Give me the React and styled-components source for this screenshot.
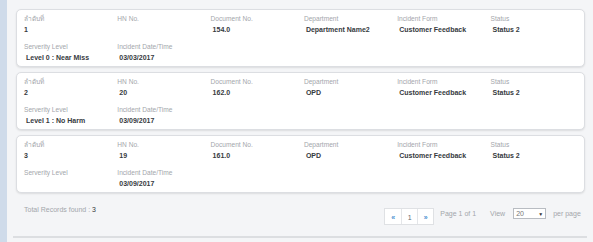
import React from 'react';
import styled, { createGlobalStyle } from 'styled-components';

const GlobalStyle = createGlobalStyle`
  html, body {
    margin: 0;
    padding: 0;
    background: #f4f5f7;
  }
  body {
    font-family: "Liberation Sans", Arial, "Noto Sans", sans-serif;
  }
`;

const records = [
  {
    no: '1',
    hn: '',
    doc: '154.0',
    dept: 'Department Name2',
    form: 'Customer Feedback',
    status: 'Status 2',
    level: 'Level 0 : Near Miss',
    date: '03/03/2017',
  },
  {
    no: '2',
    hn: '20',
    doc: '162.0',
    dept: 'OPD',
    form: 'Customer Feedback',
    status: 'Status 2',
    level: 'Level 1 : No Harm',
    date: '03/09/2017',
  },
  {
    no: '3',
    hn: '19',
    doc: '161.0',
    dept: 'OPD',
    form: 'Customer Feedback',
    status: 'Status 2',
    level: '',
    date: '03/09/2017',
  },
];

const Field = ({ label, value, flush }) => (
  <FieldBox>
    <Label>{label}</Label>
    <Value flush={flush}>{value}</Value>
  </FieldBox>
);

const App = () => (
  <>
    <GlobalStyle />
    <Page>
      <Stripe />
      <Main>
        <Panel>
          <List>
            {records.map((r) => (
              <Card key={r.no}>
                <Grid>
                  <Field label="ลำดับที่" value={r.no} flush />
                  <Field label="HN No." value={r.hn} />
                  <Field label="Document No." value={r.doc} />
                  <Field label="Department" value={r.dept} />
                  <Field label="Incident Form" value={r.form} />
                  <Field label="Status" value={r.status} />
                  <Field label="Serverity Level" value={r.level} />
                  <Field label="Incident Date/Time" value={r.date} />
                </Grid>
              </Card>
            ))}
          </List>
          <Footer>
            <Total>
              Total Records found : <strong>3</strong>
            </Total>
            <PagerArea>
              <Pager>
                <PageBtn arrow>«</PageBtn>
                <PageBtn>1</PageBtn>
                <PageBtn arrow>»</PageBtn>
              </Pager>
              <Muted>Page 1 of 1</Muted>
              <Muted>View</Muted>
              <Select>
                <span>20</span>
                <Caret>▼</Caret>
              </Select>
              <Muted>per page</Muted>
            </PagerArea>
          </Footer>
        </Panel>
      </Main>
      <Stripe />
    </Page>
  </>
);

export default App;

const Page = styled.div`
  display: flex;
  width: 593px;
  height: 242px;
  overflow: hidden;
`;

const Stripe = styled.div`
  flex: 0 0 7px;
  background: #cfdbea;
`;

const Main = styled.div`
  flex: 1;
  padding-top: 9px;
  background: #f4f5f7;
`;

const Panel = styled.div`
  margin: 0 7px 0 6px;
  border-bottom: 2px solid #dcdee1;
`;

const List = styled.div`
  display: flex;
  flex-direction: column;
  gap: 5px;
  padding: 0 2px 0 3px;
`;

const Card = styled.div`
  height: 58px;
  box-sizing: border-box;
  background: #fff;
  border: 1px solid #dcdee2;
  border-radius: 5px;
  box-shadow: 0 1px 2px rgba(0, 0, 0, 0.1);
  padding: 5px 0 0 7px;
`;

const Grid = styled.div`
  display: grid;
  grid-template-columns: repeat(6, 93.3px);
  grid-auto-rows: 28px;
`;

const FieldBox = styled.div`
  display: flex;
  flex-direction: column;
  gap: 2px;
`;

const Label = styled.div`
  font-size: 6.6px;
  line-height: 8px;
  color: #a3a6ab;
  white-space: nowrap;
`;

const Value = styled.div`
  font-size: 7px;
  line-height: 9px;
  font-weight: bold;
  color: #363a40;
  padding-left: ${({ flush }) => (flush ? '0' : '2px')};
  white-space: nowrap;
`;

const Footer = styled.div`
  display: flex;
  justify-content: space-between;
  align-items: flex-start;
  height: 43px;
  padding: 0 6px 0 11px;
`;

const Total = styled.div`
  margin-top: 13px;
  font-size: 7px;
  color: #a3a6ab;

  strong {
    color: #363a40;
    font-weight: normal;
  }
`;

const PagerArea = styled.div`
  display: flex;
  align-items: flex-start;
  margin-top: 15px;
  font-size: 7px;
`;

const Pager = styled.div`
  display: flex;
  border: 1px solid #dfe1e4;
  background: #fff;
  margin-right: 6px;
`;

const PageBtn = styled.div`
  width: 16px;
  height: 15px;
  display: flex;
  align-items: center;
  justify-content: center;
  font-size: ${({ arrow }) => (arrow ? '7px' : '7px')};
  font-weight: ${({ arrow }) => (arrow ? 'bold' : 'normal')};
  color: ${({ arrow }) => (arrow ? '#4a8fd0' : '#666a70')};
  padding-top: 1px;
  box-sizing: border-box;

  & + & {
    border-left: 1px solid #e4e6e9;
  }
`;

const Muted = styled.span`
  color: #a3a6ab;
  line-height: 11px;
  margin-right: 14px;
  white-space: nowrap;

  &:last-child {
    margin-right: 0;
  }
`;

const Select = styled.div`
  width: 33px;
  height: 11px;
  box-sizing: border-box;
  border: 1px solid #b8bcc2;
  background: #fff;
  margin: 0 7px -2px -6px;
  display: flex;
  justify-content: space-between;
  align-items: center;
  padding: 0 2px;
  font-size: 7px;
  color: #777;
`;

const Caret = styled.span`
  font-size: 5px;
  color: #333;
`;
